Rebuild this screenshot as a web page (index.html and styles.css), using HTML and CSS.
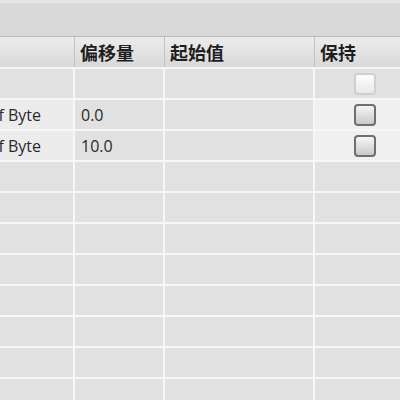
FILE: index.html
```html
<!DOCTYPE html>
<html lang="zh-CN">
<head>
    <meta charset="UTF-8">
    <title>变量表</title>
    <link rel="stylesheet" href="styles.css">
</head>
<body>
    <div class="toolbar"></div>
    <div class="grid">
        <div class="head"></div>
        <div class="head">偏移量</div>
        <div class="head">起始值</div>
        <div class="head">保持</div>

        <div class="cell"></div>
        <div class="cell"></div>
        <div class="cell"></div>
        <div class="cell check-cell"><span class="check check-off"></span></div>

        <div class="cell name">Array[0..3] of Byte</div>
        <div class="cell">0.0</div>
        <div class="cell"></div>
        <div class="cell check-cell light"><span class="check"></span></div>

        <div class="cell name">Array[0..3] of Byte</div>
        <div class="cell">10.0</div>
        <div class="cell"></div>
        <div class="cell check-cell light"><span class="check"></span></div>

        <div class="cell"></div><div class="cell"></div><div class="cell"></div><div class="cell"></div>
        <div class="cell"></div><div class="cell"></div><div class="cell"></div><div class="cell"></div>
        <div class="cell"></div><div class="cell"></div><div class="cell"></div><div class="cell"></div>
        <div class="cell"></div><div class="cell"></div><div class="cell"></div><div class="cell"></div>
        <div class="cell"></div><div class="cell"></div><div class="cell"></div><div class="cell"></div>
        <div class="cell"></div><div class="cell"></div><div class="cell"></div><div class="cell"></div>
        <div class="cell"></div><div class="cell"></div><div class="cell"></div><div class="cell"></div>
        <div class="cell"></div><div class="cell"></div><div class="cell"></div><div class="cell"></div>
    </div>
</body>
</html>
```

FILE: styles.css
```css
* {
    margin: 0;
    padding: 0;
    box-sizing: border-box;
}

body {
    background-color: #f6f6f6;
    font-family: "Open Sans", "Noto Sans CJK SC", sans-serif;
    color: #222;
    overflow: hidden;
}

.toolbar {
    height: 37px;
    background: linear-gradient(#e6e6e6 0, #e6e6e6 3px, #d9d9d9 3px, #d9d9d9 100%);
    border-bottom: 1px solid #b9b9b9;
}

.grid {
    display: grid;
    grid-template-columns: 73px 88px 148px 1fr;
    grid-auto-rows: 29px;
    grid-template-rows: 30px;
    gap: 2px;
    background-color: #f7f7f7;
}

.head {
    display: flex;
    align-items: center;
    padding-left: 5px;
    background: linear-gradient(#ececec, #d9d9d9);
    border-right: 1px solid #c2c2c2;
    margin-right: -2px;
    font-family: "Noto Sans CJK SC", sans-serif;
    font-size: 18px;
    font-weight: 700;
    color: #1e1e1e;
}

.head:last-child {
    border-right: none;
}

.cell {
    display: flex;
    align-items: center;
    padding-left: 6px;
    background-color: #e1e1e1;
    font-size: 16px;
    color: #2a2a2a;
}

.name {
    justify-content: flex-end;
    padding-right: 32px;
    white-space: nowrap;
    overflow: hidden;
    background-color: #ececec;
}

.light {
    background-color: #f0f0f0;
}

.check-cell {
    padding-left: 39px;
}

.check {
    display: block;
    width: 22px;
    height: 22px;
    border: 2px solid #6f6f6f;
    border-radius: 4px;
    background: linear-gradient(#f6f6f6, #c9c9c9);
}

.check-off {
    border-color: #cfcfcf;
    background: linear-gradient(#fdfdfd, #e9e9e9);
}
```
